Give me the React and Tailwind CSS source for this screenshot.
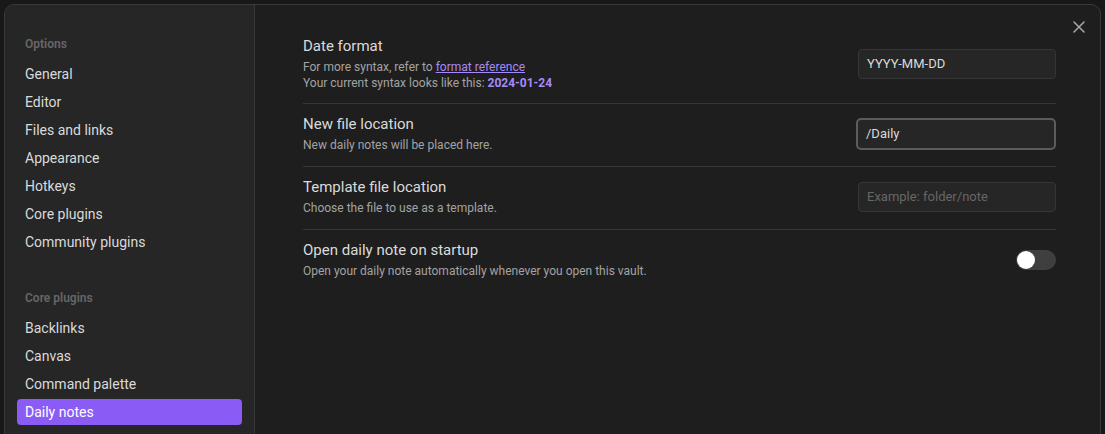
import { useState } from 'react';

const OPTIONS = ['General', 'Editor', 'Files and links', 'Appearance', 'Hotkeys', 'Core plugins', 'Community plugins'];
const CORE = ['Backlinks', 'Canvas', 'Command palette', 'Daily notes', 'File recovery', 'Files', 'Graph view'];

const NavItem = ({ label, active, onClick }) => (
  <div
    onClick={onClick}
    className={`mb-[2px] flex h-[26px] cursor-pointer items-center rounded px-2 text-[14px] ${
      active ? 'bg-[#8a5cf5] text-white' : 'text-[#dadada]'
    }`}
  >
    {label}
  </div>
);

const Setting = ({ title, children, control, first }) => (
  <div className={`flex items-center gap-6 ${first ? 'py-3' : 'border-t border-[#363636] pt-[11px] pb-[13px]'}`}>
    <div className="flex-1">
      <div className="text-[15px] leading-[18px] text-[#dadada]">{title}</div>
      <div className="pt-1 text-xs leading-4 text-[#a3a3a3]">{children}</div>
    </div>
    {control}
  </div>
);

export default function App() {
  const [active, setActive] = useState('Daily notes');
  const [startup, setStartup] = useState(false);

  return (
    <div className="h-screen overflow-hidden bg-[#181818] px-1 pt-1 font-['Roboto',sans-serif]">
      <div className="relative flex h-[600px] overflow-hidden rounded-[10px] border border-[#3a3a3a] bg-[#1e1e1e]">
        {/* Sidebar */}
        <div className="w-[250px] shrink-0 border-r border-[#363636] bg-[#262626] px-3 pt-[31px]">
          <div className="px-2 pb-2 text-xs font-semibold leading-[17px] text-[#666666]">Options</div>
          {OPTIONS.map((item) => (
            <NavItem key={item} label={item} active={active === item} onClick={() => setActive(item)} />
          ))}
          <div className="mt-[35px] px-2 pb-2 text-xs font-semibold leading-[17px] text-[#666666]">Core plugins</div>
          {CORE.map((item) => (
            <NavItem key={item} label={item} active={active === item} onClick={() => setActive(item)} />
          ))}
        </div>

        {/* Content */}
        <div className="flex-1 pl-12 pr-[44px] pt-5">
          <Setting
            first
            title="Date format"
            control={
              <div className="flex h-[30px] w-[198px] items-center rounded border border-[#363636] bg-[#262626] px-2 text-[13px] text-[#dadada]">
                YYYY-MM-DD
              </div>
            }
          >
            For more syntax, refer to <span className="text-[#a68af9] underline">format reference</span>
            <br />
            Your current syntax looks like this: <span className="font-bold text-[#a68af9]">2024-01-24</span>
          </Setting>

          <Setting
            title="New file location"
            control={
              <div className="flex h-[32px] w-[200px] items-center rounded-[5px] border-2 border-[#5c5c5c] bg-[#262626] px-2 text-[13px] text-[#dadada]">
                /Daily
              </div>
            }
          >
            New daily notes will be placed here.
          </Setting>

          <Setting
            title="Template file location"
            control={
              <div className="flex h-[30px] w-[198px] items-center rounded border border-[#363636] bg-[#262626] px-2 text-[13px] text-[#666666]">
                Example: folder/note
              </div>
            }
          >
            Choose the file to use as a template.
          </Setting>

          <Setting
            title="Open daily note on startup"
            control={
              <div
                onClick={() => setStartup(!startup)}
                className={`flex h-5 w-10 cursor-pointer items-center rounded-full px-px ${
                  startup ? 'justify-end bg-[#8a5cf5]' : 'bg-[#3f3f3f]'
                }`}
              >
                <div className="h-[18px] w-[18px] rounded-full bg-white" />
              </div>
            }
          >
            Open your daily note automatically whenever you open this vault.
          </Setting>
        </div>

        {/* Close */}
        <div className="absolute right-[9px] top-[10px] flex h-6 w-6 items-center justify-center">
          <svg width="12" height="12" viewBox="0 0 12 12" fill="none" stroke="#a8a8a8" strokeWidth="1.5" strokeLinecap="round">
            <path d="M1 1L11 11M11 1L1 11" />
          </svg>
        </div>
      </div>
    </div>
  );
}
